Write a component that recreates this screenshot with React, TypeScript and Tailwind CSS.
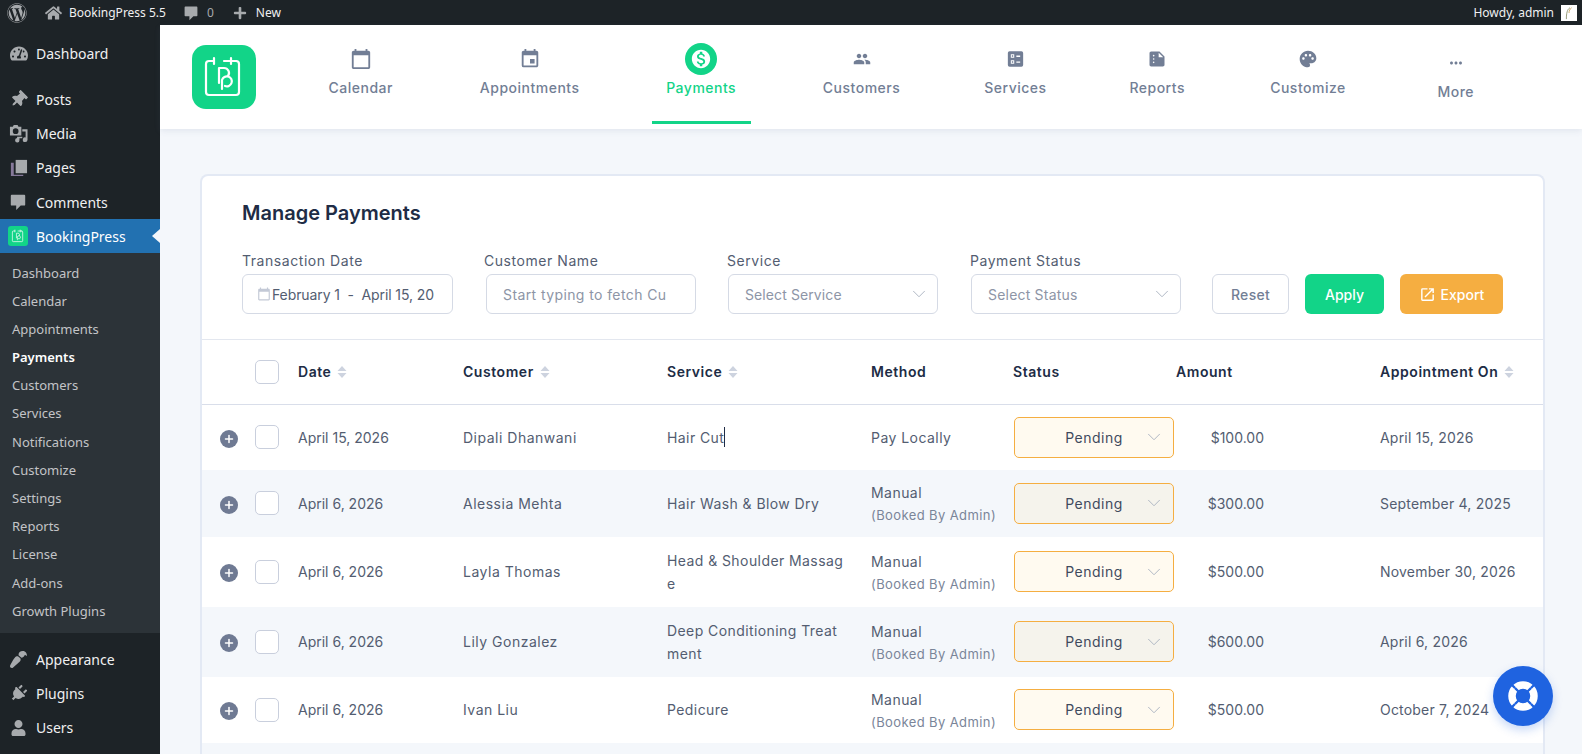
import React from 'react';
import { ChevronDown, Plus } from 'lucide-react';
import {
  FaHome,
  FaPaintBrush,
  FaPlug,
  FaPlus,
  FaTachometerAlt,
  FaThumbtack,
  FaUser,
  FaWordpress,
} from 'react-icons/fa';
import {
  MdCalendarToday,
  MdEvent,
  MdMonetizationOn,
  MdMoreHoriz,
  MdOpenInNew,
  MdPalette,
  MdPeople,
  MdSummarize,
} from 'react-icons/md';

const CommentIcon = ({ className }: { className?: string }) => (
  <svg viewBox="0 0 20 20" className={className} fill="currentColor">
    <path d="M3 2h14a1 1 0 0 1 1 1v10a1 1 0 0 1-1 1h-4l-5 5v-5H3a1 1 0 0 1-1-1V3a1 1 0 0 1 1-1z" />
  </svg>
);

const MediaIcon = ({ className }: { className?: string }) => (
  <svg viewBox="0 0 20 20" className={className} fill="currentColor">
    <path fillRule="evenodd" d="M1 3h3l1-2h4l1 2h3v9H1V3zm6 1.500a3 3 0 1 0 0 6 3 3 0 0 0 0-6z" />
    <path d="M14 5.500h5.500V16.500a2.500 2.500 0 1 1-2-2.400V8h-3.500V5.500zM8.500 13.500h5.500V15H11v2a2.300 2.300 0 1 1-2.500-2.200v-1.300z" />
  </svg>
);

const PagesIcon = ({ className }: { className?: string }) => (
  <svg viewBox="0 0 20 20" className={className} fill="currentColor">
    <path d="M7 2h12v14H7z" />
    <path d="M2 5h3v12.500h10V19H2z" fill="#86799a" />
  </svg>
);

const ServicesIcon = ({ className }: { className?: string }) => (
  <svg viewBox="0 0 20 20" className={className} fill="currentColor">
    <path
      fillRule="evenodd"
      d="M3 1h14a2 2 0 0 1 2 2v14a2 2 0 0 1-2 2H3a2 2 0 0 1-2-2V3a2 2 0 0 1 2-2zm1.500 3.500v4h4v-4h-4zm1.200 1.200h1.600v1.600H5.700V5.700zM4.500 11.500v4h4v-4h-4zm1.200 1.200h1.600v1.600H5.700v-1.600zM11 6v1.500h4.500V6H11zm0 7v1.500h4.500V13H11z"
    />
  </svg>
);

const BookingLogo = ({ className }: { className?: string }) => (
  <svg viewBox="0 0 64 64" className={className} fill="none" stroke="white" strokeWidth="2.200" strokeLinecap="round" strokeLinejoin="round">
    <path d="M22 16h-5a3 3 0 0 0-3 3v28a3 3 0 0 0 3 3h27a3 3 0 0 0 3-3V19a3 3 0 0 0-3-3" />
    <path d="M32 16h12M22 13v6M39 13v6" />
    <path d="M27 38V23h5a5 5 0 0 1 4 8" />
    <path d="M30 44V35a5 5 0 1 1 3 6" />
  </svg>
);

const SortCaret = () => (
  <svg viewBox="0 0 10 12" className="w-[10px] h-[12px] shrink-0" fill="#cdd3df">
    <path d="M5 0l4.500 5H.5zM5 12L.5 7h9z" />
  </svg>
);

const HelpIcon = () => (
  <svg viewBox="0 0 32 32" className="w-[32px] h-[32px]" fill="none">
    <circle cx="16" cy="16" r="11" stroke="white" strokeWidth="7.500" />
    <path d="M8 8l4.500 4.500M24 8l-4.500 4.500M8 24l4.500-4.500M24 24l-4.500-4.500" stroke="#1f63e0" strokeWidth="2.400" />
    <path d="M5 5l3 3M27 5l-3 3M5 27l3-3M27 27l-3-3" stroke="#1f63e0" strokeWidth="2.400" />
  </svg>
);

const topItems = [
  { label: 'Posts', icon: <FaThumbtack className="w-[17px] h-[17px] rotate-45" /> },
  { label: 'Media', icon: <MediaIcon className="w-[19px] h-[19px]" /> },
  { label: 'Pages', icon: <PagesIcon className="w-[19px] h-[19px]" /> },
  { label: 'Comments', icon: <CommentIcon className="w-[18px] h-[18px]" /> },
];

const subItems = [
  'Dashboard',
  'Calendar',
  'Appointments',
  'Payments',
  'Customers',
  'Services',
  'Notifications',
  'Customize',
  'Settings',
  'Reports',
  'License',
  'Add-ons',
  'Growth Plugins',
];

const bottomItems = [
  { label: 'Appearance', icon: <FaPaintBrush className="w-[17px] h-[17px] rotate-180" /> },
  { label: 'Plugins', icon: <FaPlug className="w-[17px] h-[17px] rotate-45" /> },
  { label: 'Users', icon: <FaUser className="w-[15px] h-[16px]" /> },
];

const navItems = [
  { label: 'Calendar', width: 'w-[169.400px]', icon: <MdCalendarToday className="w-[22px] h-[22px]" /> },
  { label: 'Appointments', width: 'w-[168.600px]', icon: <MdEvent className="w-[22px] h-[22px]" /> },
  { label: 'Payments', width: 'w-[174.400px]', active: true, icon: <MdMonetizationOn className="w-[22px] h-[22px] text-white" /> },
  { label: 'Customers', width: 'w-[146.400px]', icon: <MdPeople className="w-[18px] h-[18px]" /> },
  { label: 'Services', width: 'w-[161.400px]', icon: <ServicesIcon className="w-[17px] h-[18px]" /> },
  { label: 'Reports', width: 'w-[122px]', icon: <MdSummarize className="w-[20px] h-[20px]" /> },
  { label: 'Customize', width: 'w-[179.600px]', icon: <MdPalette className="w-[20px] h-[20px]" /> },
  { label: 'More', width: 'w-[116px]', more: true, icon: <MdMoreHoriz className="w-[18px] h-[18px]" /> },
];

const rows = [
  { date: 'April 15, 2026', customer: 'Dipali Dhanwani', service: ['Hair Cut'], method: 'Pay Locally', amount: '$100.00', on: 'April 15, 2026', h: 'h-[65.500px]', caret: true },
  { date: 'April 6, 2026', customer: 'Alessia Mehta', service: ['Hair Wash & Blow Dry'], method: 'Manual', amount: '$300.00', on: 'September 4, 2025', h: 'h-[66.500px]', tint: true },
  { date: 'April 6, 2026', customer: 'Layla Thomas', service: ['Head & Shoulder Massag', 'e'], method: 'Manual', amount: '$500.00', on: 'November 30, 2026', h: 'h-[70px]' },
  { date: 'April 6, 2026', customer: 'Lily Gonzalez', service: ['Deep Conditioning Treat', 'ment'], method: 'Manual', amount: '$600.00', on: 'April 6, 2026', h: 'h-[70px]', tint: true },
  { date: 'April 6, 2026', customer: 'Ivan Liu', service: ['Pedicure'], method: 'Manual', amount: '$500.00', on: 'October 7, 2024', h: 'h-[66.500px]' },
];

const gridCols = 'grid grid-cols-[53px_43px_165px_204px_204px_142px_163px_204px_1fr] items-center';

const Checkbox = () => (
  <span className="block w-[24px] h-[24px] rounded-[5px] border border-[#c9cfdd] bg-white" />
);

const Field = ({ label, children, className = '', labelClass = '' }: { label: string; children: React.ReactNode; className?: string; labelClass?: string }) => (
  <div className={`shrink-0 ${className}`}>
    <div className={`h-[20px] leading-[20px] mb-[3px] text-[14px] tracking-[0.55px] text-[#535d71] whitespace-nowrap ${labelClass}`}>{label}</div>
    {children}
  </div>
);

const inputBox = 'h-[40px] rounded-[6px] border border-[#d5dae5] bg-white flex items-center text-[14px] overflow-hidden whitespace-nowrap';

export default function App() {
  return (
    <div className="w-[1582px] h-[754px] overflow-hidden flex flex-col font-['Inter',sans-serif]">
      <header className="h-[25px] shrink-0 bg-[#1d2327] text-[#f0f0f1] text-[12px] flex items-center font-['Noto_Sans',sans-serif]">
        <FaWordpress className="w-[20px] h-[20px] ml-[7px] text-[#a7aaad]" />
        <FaHome className="w-[17px] h-[16px] ml-[18px] text-[#a7aaad]" />
        <span className="ml-[7px]">BookingPress 5.5</span>
        <CommentIcon className="w-[16px] h-[16px] ml-[17px] text-[#a7aaad]" />
        <span className="ml-[8px] text-[#a7aaad]">0</span>
        <FaPlus className="w-[14px] h-[14px] ml-[19px] text-[#a7aaad]" />
        <span className="ml-[9px]">New</span>
        <span className="ml-auto">Howdy, admin</span>
        <span className="w-[16px] h-[16px] ml-[7px] mr-[5px] bg-white flex items-center justify-center">
          <svg viewBox="0 0 16 16" className="w-[14px] h-[14px]" fill="none" strokeWidth="1">
            <path d="M5 15C5 8 6 4 9 2" stroke="#8a8f6a" />
            <path d="M8 8c0-2 1-5 3-6" stroke="#c9a45c" />
          </svg>
        </span>
      </header>

      <div className="flex flex-1 min-h-0">
        <aside className="w-[160px] shrink-0 bg-[#1d2327] text-[#f0f0f1] text-[14px] pt-[11px] font-['Noto_Sans',sans-serif]">
          <div className="h-[34px] flex items-center">
            <span className="w-[36px] flex justify-center text-[#a7aaad] pl-[2px]">
              <FaTachometerAlt className="w-[18px] h-[17px]" />
            </span>
            Dashboard
          </div>
          <div className="mt-[12px]">
            {topItems.map((item) => (
              <div key={item.label} className="h-[34.300px] flex items-center">
                <span className="w-[36px] flex justify-center text-[#a7aaad]">{item.icon}</span>
                {item.label}
              </div>
            ))}
          </div>
          <div className="relative h-[34px] flex items-center bg-[#2271b1] text-white">
            <span className="w-[36px] flex justify-center">
              <span className="w-[20px] h-[20px] rounded-[3px] bg-[#12d488] flex items-center justify-center">
                <BookingLogo className="w-[20px] h-[20px]" />
              </span>
            </span>
            BookingPress
            <span className="absolute right-0 top-[10px] border-y-[7px] border-y-transparent border-r-[8px] border-r-[#f4f7fb]" />
          </div>
          <div className="bg-[#2c3338] pt-[6px] pb-[7px] text-[13px] text-[#c3c4c7]">
            {subItems.map((item) => (
              <div
                key={item}
                className={`h-[28.200px] flex items-center pl-[12px] ${item === 'Payments' ? 'text-white font-semibold' : ''}`}
              >
                {item}
              </div>
            ))}
          </div>
          <div className="mt-[10px]">
            {bottomItems.map((item) => (
              <div key={item.label} className="h-[34px] flex items-center">
                <span className="w-[36px] flex justify-center text-[#a7aaad]">{item.icon}</span>
                {item.label}
              </div>
            ))}
          </div>
        </aside>

        <main className="flex-1 min-w-0 bg-[#f4f7fb] flex flex-col">
          <nav className="h-[104px] shrink-0 bg-white flex shadow-[0_2px_6px_rgba(100,116,150,0.12)]">
            <div className="w-[64px] h-[64px] ml-[32px] mt-[20px] rounded-[14px] bg-[#12d488] shrink-0">
              <BookingLogo className="w-[64px] h-[64px]" />
            </div>
            <div className="flex ml-[20px]">
              {navItems.map((item) => (
                <div key={item.label} className={`${item.width} flex flex-col items-center pt-[18px]`}>
                  {item.active ? (
                    <span className="w-[32px] h-[32px] rounded-full bg-[#12d488] flex items-center justify-center">{item.icon}</span>
                  ) : (
                    <span className={`h-[32px] flex items-center justify-center text-[#727e95] ${item.more ? 'mt-[4px]' : ''}`}>{item.icon}</span>
                  )}
                  <span className={`mt-[3px] h-[20px] leading-[20px] text-[14px] font-medium tracking-[0.5px] ${item.active ? 'text-[#12d488]' : 'text-[#727e95]'}`}>
                    {item.label}
                  </span>
                  {item.active && <span className="w-[99px] h-[3px] mt-auto mb-[5px] bg-[#12d488]" />}
                </div>
              ))}
            </div>
          </nav>

          <section className="mt-[45px] ml-[40px] w-[1345px] flex-1 rounded-t-[8px] border-2 border-b-0 border-[#e3e9f4] bg-white overflow-hidden">
            <div className="pl-[40px] pt-[22px] pb-[25px] border-b border-[#e3e7ef]">
              <h1 className="h-[30px] leading-[30px] text-[20px] font-semibold text-[#202c45]">Manage Payments</h1>
              <div className="mt-[23px] flex items-end">
                <Field label="Transaction Date" className="w-[211px]">
                  <div className={`${inputBox} pl-[14px] text-[#535d71] tracking-[-0.1px]`}>
                    <MdCalendarToday className="w-[14px] h-[14px] text-[#c3c9d6] mr-px shrink-0" />
                    February 1&nbsp; -&nbsp; April 15, 20
                  </div>
                </Field>
                <Field label="Customer Name" className="w-[210px] ml-[33px]" labelClass="-ml-[2px]">
                  <div className={`${inputBox} pl-[16px] text-[#8d95a6] tracking-[0.4px]`}>Start typing to fetch Cu</div>
                </Field>
                <Field label="Service" className="w-[210px] ml-[32px]" labelClass="-ml-[1px]">
                  <div className={`${inputBox} pl-[16px] pr-[7px] justify-between text-[#8d95a6] tracking-[0.1px]`}>
                    Select Service
                    <ChevronDown className="w-[22px] h-[22px] text-[#a9b1c0]" strokeWidth={1} />
                  </div>
                </Field>
                <Field label="Payment Status" className="w-[210px] ml-[33px]" labelClass="-ml-[1px]">
                  <div className={`${inputBox} pl-[16px] pr-[7px] justify-between text-[#8d95a6] tracking-[0.2px]`}>
                    Select Status
                    <ChevronDown className="w-[22px] h-[22px] text-[#a9b1c0]" strokeWidth={1} />
                  </div>
                </Field>
                <button className="ml-[31px] w-[77px] h-[40px] rounded-[6px] border border-[#d5dae5] bg-white text-[14px] tracking-[0.3px] text-[#727e95] font-medium">
                  Reset
                </button>
                <button className="ml-[16px] w-[79px] h-[40px] rounded-[6px] bg-[#12d488] text-[14px] text-white font-medium">
                  Apply
                </button>
                <button className="ml-[16px] w-[103px] h-[40px] rounded-[6px] bg-[#f5ae41] text-[14px] text-white font-medium flex items-center justify-center gap-[5px]">
                  <MdOpenInNew className="w-[17px] h-[17px]" />
                  Export
                </button>
              </div>
            </div>

            <div className={`${gridCols} h-[64.500px] border-b border-[#d9deea] text-[14px] font-semibold tracking-[0.55px] text-[#202c45]`}>
              <span />
              <Checkbox />
              <span className="flex items-center gap-[6px]">Date <SortCaret /></span>
              <span className="flex items-center gap-[6px]">Customer <SortCaret /></span>
              <span className="flex items-center gap-[6px]">Service <SortCaret /></span>
              <span>Method</span>
              <span>Status</span>
              <span>Amount</span>
              <span className="flex items-center gap-[6px] whitespace-nowrap">Appointment On <SortCaret /></span>
            </div>

            {rows.map((row, i) => (
              <div key={i} className={`${gridCols} ${row.h} text-[14px] text-[#535d71] ${row.tint ? 'bg-[#f4f7fb]' : 'bg-white'}`}>
                <span className="ml-[18px] mt-[3px] w-[18px] h-[18px] rounded-full bg-[#6f7a93] flex items-center justify-center">
                  <Plus className="w-[12px] h-[12px] text-white" strokeWidth={3} />
                </span>
                <Checkbox />
                <span>{row.date}</span>
                <span className="tracking-[0.5px]">{row.customer}</span>
                <div className="leading-[23px] tracking-[0.42px]">
                  {row.service.map((line) => (
                    <div key={line} className="flex items-center">
                      {line}
                      {row.caret && <span className="w-px h-[20px] bg-[#202c45]" />}
                    </div>
                  ))}
                </div>
                <div className={`leading-[23px] ${row.method === 'Manual' ? 'mt-[2px]' : ''}`}>
                  <div className="tracking-[0.45px]">{row.method}</div>
                  {row.method === 'Manual' && <div className="text-[13px] tracking-[0.4px] text-[#7a8599] whitespace-nowrap">(Booked By Admin)</div>}
                </div>
                <div className={`ml-[1px] w-[160px] h-[41px] rounded-[5px] border border-[#f5ae41] flex items-center text-[#3f4a5e] pr-[8px] ${row.tint ? 'bg-[#f5f3ec]' : 'bg-[#fffaf0]'}`}>
                  <span className="flex-1 pl-[30px] text-center tracking-[0.5px]">Pending</span>
                  <ChevronDown className="w-[22px] h-[22px] text-[#a9b1c0]" strokeWidth={1} />
                </div>
                <span className="w-[88px] text-right">{row.amount}</span>
                <span className="whitespace-nowrap tracking-[0.2px]">{row.on}</span>
              </div>
            ))}
            <div className="h-[20px] bg-[#f4f7fb]" />
          </section>
        </main>
      </div>

      <button className="fixed left-[1493px] top-[666px] w-[60px] h-[60px] rounded-full bg-[#1f63e0] flex items-center justify-center shadow-[0_4px_10px_rgba(31,99,224,0.25)]">
        <HelpIcon />
      </button>
    </div>
  );
}
